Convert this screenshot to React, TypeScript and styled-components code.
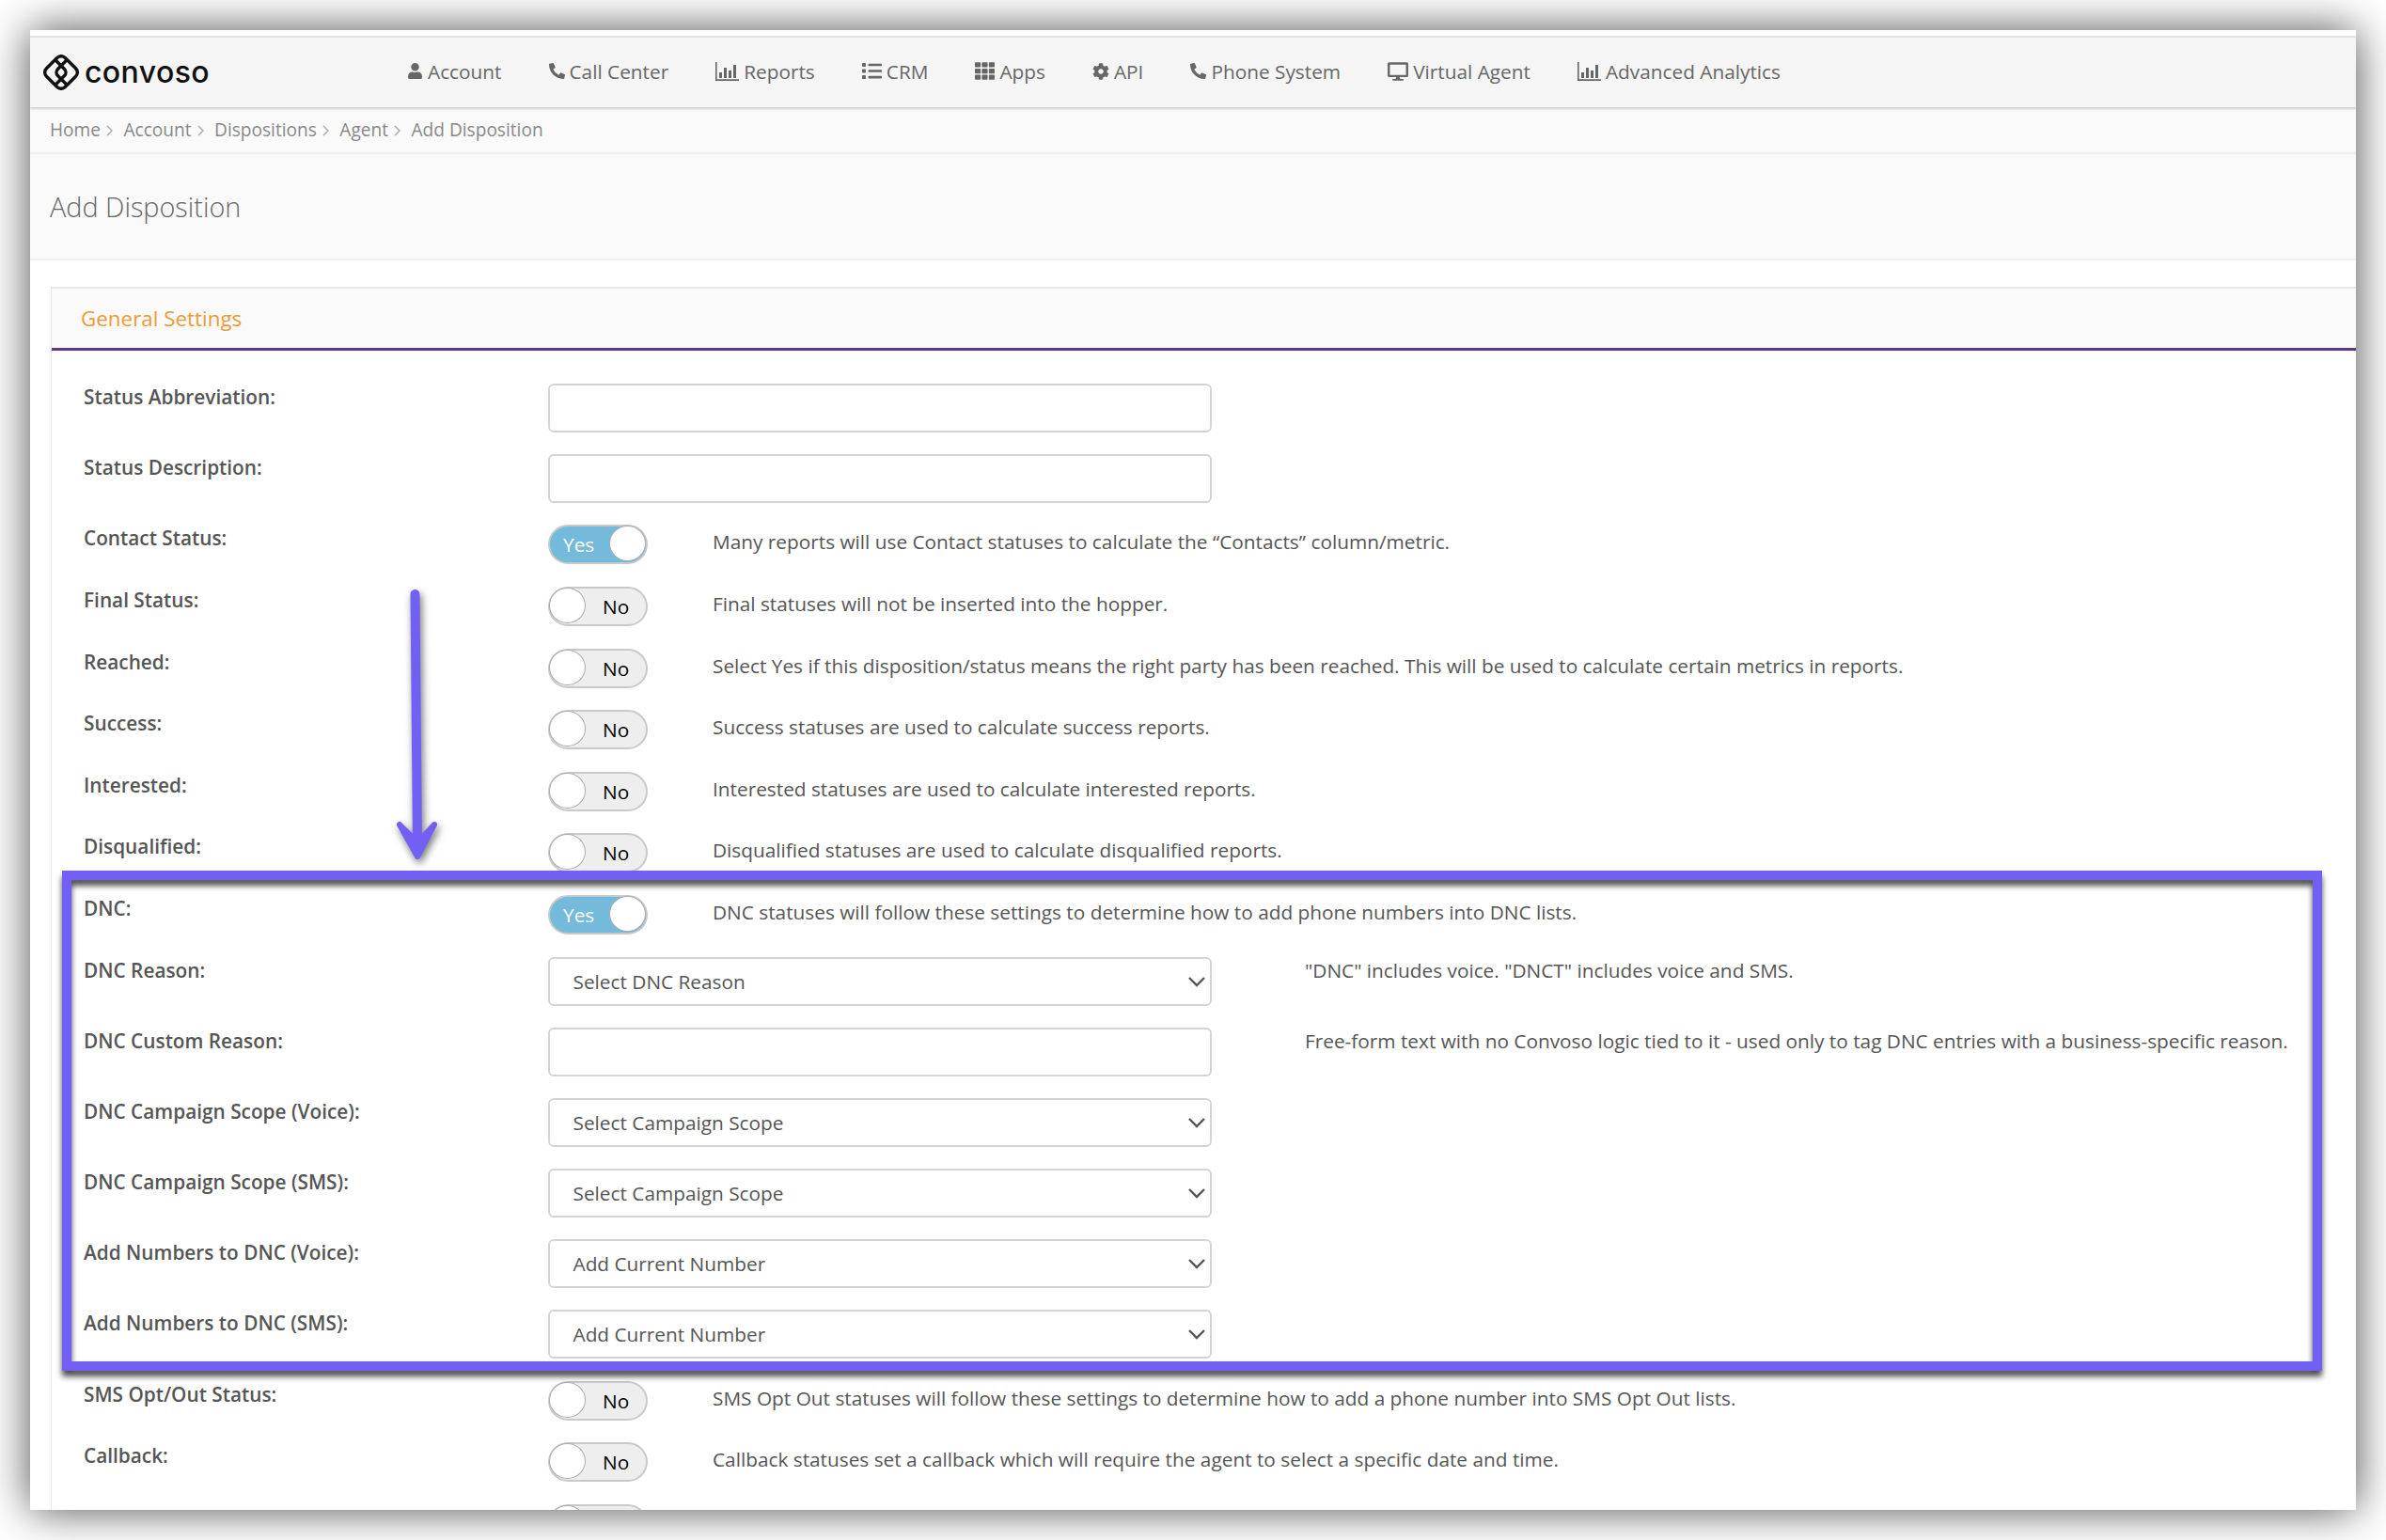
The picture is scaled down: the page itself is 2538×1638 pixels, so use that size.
import React from "react";
import styled, { createGlobalStyle } from "styled-components";
import { FaUser, FaPhoneAlt, FaList, FaTh, FaCog, FaDesktop } from "react-icons/fa";

const Global = createGlobalStyle`
  html, body { margin: 0; padding: 0; background: #fff; }
  body { font-family: "Open Sans", "Liberation Sans", sans-serif; font-size: 20.8px; color: #555; }
  * { box-sizing: border-box; }
`;

const Page = styled.div`
  width: 2538px;
  height: 1638px;
  padding: 32px;
  overflow: hidden;
`;

const Window = styled.div`
  position: relative;
  height: 1574px;
  background: #fff;
  padding-top: 6px;
  box-shadow: 0 0 44px rgba(0, 0, 0, 0.7);
  overflow: hidden;
`;

const NavBar = styled.header`
  display: flex;
  align-items: center;
  height: 76px;
  padding: 0 0 3px 14px;
  background: #f5f5f5;
  border-top: 2px solid #e2e2e2;
  box-shadow: 0 2px 2px rgba(0, 0, 0, 0.17);
  position: relative;
`;

const Logo = styled.div`
  display: flex;
  align-items: center;
  gap: 6px;
  width: 387px;
  padding-top: 3px;
`;

const LogoWord = styled.span`
  font-family: Inter, "Liberation Sans", sans-serif;
  font-size: 32px;
  font-weight: 500;
  color: #111;
  letter-spacing: 0.4px;
  line-height: 1;
`;

const NavList = styled.nav`
  display: flex;
  align-items: center;
  gap: 50px;
`;

const NavItem = styled.a`
  display: flex;
  align-items: center;
  gap: 5px;
  color: #666;
  font-size: 20.8px;
  white-space: nowrap;
  svg { fill: currentColor; flex: none; }
`;

const Breadcrumbs = styled.div`
  display: flex;
  align-items: center;
  height: 50px;
  padding-left: 21px;
  background: #fafafa;
  border-bottom: 2px solid #efefef;
  color: #888;
  font-size: 19.1px;
`;

const Crumb = styled.span`
  display: flex;
  align-items: center;
  gap: 6px;
  margin-right: 11.5px;
`;

const Separator = styled.svg`
  width: 7px;
  height: 12px;
  margin-top: 2px;
`;

const TitleBar = styled.div`
  display: flex;
  align-items: center;
  height: 113px;
  padding: 0 0 1px 21px;
  background: #fafafa;
  border-bottom: 2px solid #efefef;
`;

const Title = styled.h1`
  margin: 0;
  font-size: 28.8px;
  font-weight: 300;
  color: #666;
`;

const Panel = styled.section`
  margin: 28px 0 0 22px;
  border-left: 1px solid #e6e6e6;
  border-top: 2px solid #e6e6e6;
`;

const PanelHeading = styled.div`
  display: flex;
  align-items: center;
  height: 66px;
  padding-left: 31px;
  background: #fafafa;
  border-bottom: 3px solid #5b3a86;
  color: #ee9a36;
  font-size: 22.4px;
`;

const PanelBody = styled.div`
  padding: 35px 0 0 34px;
`;

const Row = styled.div<{ $h: number }>`
  display: flex;
  align-items: flex-start;
  height: ${(p) => p.$h}px;
`;

const Label = styled.label`
  flex: none;
  width: 494px;
  line-height: 28px;
  font-weight: 600;
  color: #555;
  font-size: 20.8px;
`;

const TextInput = styled.input`
  flex: none;
  width: 706px;
  height: 52px;
  background: #fff;
  border: 2px solid #d4d4d4;
  border-radius: 6px;
`;

const SelectBox = styled.div`
  flex: none;
  display: flex;
  align-items: center;
  justify-content: space-between;
  width: 706px;
  height: 52px;
  padding: 0 4px 0 24.5px;
  background: #fff;
  border: 2px solid #d4d4d4;
  border-radius: 6px;
  color: #555;
`;

const Chevron = styled.svg`
  width: 20px;
  height: 12px;
  fill: none;
  stroke: #555;
  stroke-width: 2.4;
`;

const Switch = styled.div<{ $on: boolean }>`
  flex: none;
  position: relative;
  width: 106px;
  height: 42px;
  border-radius: 21px;
  border: 2px solid #c9c9c9;
  background: ${(p) => (p.$on ? "#74bbdb" : "#eeeeee")};
  color: ${(p) => (p.$on ? "#fff" : "#000")};
  display: flex;
  align-items: center;
  padding: ${(p) => (p.$on ? "0 0 0 14px" : "0 0 0 56px")};
  font-size: 20.8px;
`;

const Knob = styled.span<{ $on: boolean }>`
  position: absolute;
  top: -1px;
  ${(p) => (p.$on ? "right: 0;" : "left: -1px;")}
  width: 39px;
  height: 38px;
  border-radius: 50%;
  background: #fff;
  border: 1.5px solid #aaa;
`;

const Help = styled.p<{ $gap: number; $top: number }>`
  margin: ${(p) => p.$top}px 0 0 ${(p) => p.$gap}px;
  line-height: 28px;
  color: #555;
  white-space: nowrap;
`;

const Highlight = styled.div`
  position: absolute;
  left: 34px;
  top: 894px;
  width: 2404px;
  height: 532px;
  border: 10px solid #7260f5;
  filter: drop-shadow(0 6px 3px rgba(0, 0, 0, 0.7));
  pointer-events: none;
`;

const Arrow = styled.svg`
  position: absolute;
  left: 384px;
  top: 585px;
  width: 80px;
  height: 310px;
  fill: #7260f5;
  stroke: #7260f5;
  stroke-linecap: round;
  stroke-linejoin: round;
  filter: drop-shadow(2px 4px 4px rgba(0, 0, 0, 0.55));
  overflow: visible;
  pointer-events: none;
`;

const BarsIcon = ({ w }: { w: number }) => (
  <svg width={w} height={w * 0.8} viewBox="0 0 25 20">
    <path d="M0 0h1.6v18.2H25V20H0z" />
    <path d="M4 11h3v6H4zM9 6h3v11H9zM14 9h3v8h-3zM19 3h3v14h-3z" />
  </svg>
);

const nav: [React.ReactNode, string][] = [
  [<FaUser size={17} />, "Account"],
  [<FaPhoneAlt size={17} />, "Call Center"],
  [<BarsIcon w={25} />, "Reports"],
  [<FaList size={21} />, "CRM"],
  [<FaTh size={21} />, "Apps"],
  [<FaCog size={18} />, "API"],
  [<FaPhoneAlt size={17} />, "Phone System"],
  [<FaDesktop size={22} />, "Virtual Agent"],
  [<BarsIcon w={25} />, "Advanced Analytics"],
];

type RowDef =
  | { kind: "input"; label: string; help?: string }
  | { kind: "select"; label: string; value: string; help?: string }
  | { kind: "toggle"; label: string; on?: boolean; help?: string };

const rows: RowDef[] = [
  { kind: "input", label: "Status Abbreviation:" },
  { kind: "input", label: "Status Description:" },
  { kind: "toggle", label: "Contact Status:", on: true, help: "Many reports will use Contact statuses to calculate the “Contacts” column/metric." },
  { kind: "toggle", label: "Final Status:", help: "Final statuses will not be inserted into the hopper." },
  { kind: "toggle", label: "Reached:", help: "Select Yes if this disposition/status means the right party has been reached. This will be used to calculate certain metrics in reports." },
  { kind: "toggle", label: "Success:", help: "Success statuses are used to calculate success reports." },
  { kind: "toggle", label: "Interested:", help: "Interested statuses are used to calculate interested reports." },
  { kind: "toggle", label: "Disqualified:", help: "Disqualified statuses are used to calculate disqualified reports." },
  { kind: "toggle", label: "DNC:", on: true, help: "DNC statuses will follow these settings to determine how to add phone numbers into DNC lists." },
  { kind: "select", label: "DNC Reason:", value: "Select DNC Reason", help: "\"DNC\" includes voice. \"DNCT\" includes voice and SMS." },
  { kind: "input", label: "DNC Custom Reason:", help: "Free-form text with no Convoso logic tied to it - used only to tag DNC entries with a business-specific reason." },
  { kind: "select", label: "DNC Campaign Scope (Voice):", value: "Select Campaign Scope" },
  { kind: "select", label: "DNC Campaign Scope (SMS):", value: "Select Campaign Scope" },
  { kind: "select", label: "Add Numbers to DNC (Voice):", value: "Add Current Number" },
  { kind: "select", label: "Add Numbers to DNC (SMS):", value: "Add Current Number" },
  { kind: "toggle", label: "SMS Opt/Out Status:", help: "SMS Opt Out statuses will follow these settings to determine how to add a phone number into SMS Opt Out lists." },
  { kind: "toggle", label: "Callback:", help: "Callback statuses set a callback which will require the agent to select a specific date and time." },
  { kind: "toggle", label: "" },
];

const LogoMark = () => (
  <svg width="38" height="38" viewBox="0 0 38 38" fill="none" stroke="#111" strokeWidth="3.4" strokeLinejoin="round">
    <g transform="rotate(45 19 19)">
      <rect x="5" y="5" width="28" height="28" rx="6" />
      <path d="M14 5v14a5 5 0 0 0 5 5h14" />
      <path d="M24 33V19a5 5 0 0 0-5-5H5" />
    </g>
  </svg>
);

const crumbs = ["Home", "Account", "Dispositions", "Agent"];

export default function App() {
  return (
    <Page>
      <Global />
      <Window>
        <NavBar>
          <Logo>
            <LogoMark />
            <LogoWord>convoso</LogoWord>
          </Logo>
          <NavList>
            {nav.map(([icon, text]) => (
              <NavItem key={text}>
                {icon}
                {text}
              </NavItem>
            ))}
          </NavList>
        </NavBar>
        <Breadcrumbs>
          {crumbs.map((c) => (
            <Crumb key={c}>
              {c}
              <Separator viewBox="0 0 7 12" fill="none" stroke="#aaa" strokeWidth="1.4">
                <path d="M1 1l5 5-5 5" />
              </Separator>
            </Crumb>
          ))}
          <Crumb>Add Disposition</Crumb>
        </Breadcrumbs>
        <TitleBar>
          <Title>Add Disposition</Title>
        </TitleBar>
        <Panel>
          <PanelHeading>General Settings</PanelHeading>
          <PanelBody>
            {rows.map((r, i) => (
              <Row key={i} $h={r.kind === "toggle" ? 65.6 : 75.2}>
                <Label>{r.label}</Label>
                {r.kind === "input" && <TextInput />}
                {r.kind === "select" && (
                  <SelectBox>
                    {r.value}
                    <Chevron viewBox="0 0 20 12">
                      <path d="M2 2l8 8 8-8" />
                    </Chevron>
                  </SelectBox>
                )}
                {r.kind === "toggle" && (
                  <Switch $on={!!r.on}>
                    {r.on ? "Yes" : "No"}
                    <Knob $on={!!r.on} />
                  </Switch>
                )}
                {r.help && (
                  <Help $gap={r.kind === "toggle" ? 69 : 99} $top={r.kind === "toggle" ? 4 : 0}>
                    {r.help}
                  </Help>
                )}
              </Row>
            ))}
          </PanelBody>
        </Panel>
        <Highlight />
        <Arrow viewBox="0 0 80 310">
          <path d="M25.5 15L28 285" strokeWidth="10" fill="none" />
          <path d="M9 260L28 294L46 260L34 273L22 273Z" strokeWidth="6" />
        </Arrow>
      </Window>
    </Page>
  );
}
